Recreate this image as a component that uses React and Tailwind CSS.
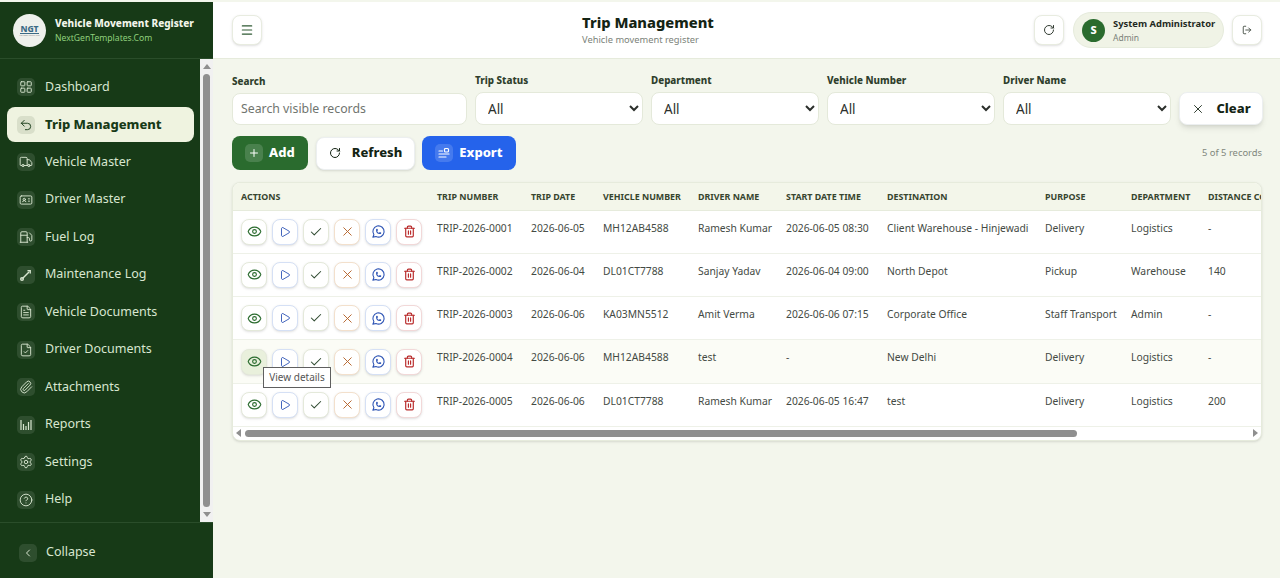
import React from "react";
import {
  LayoutGrid, Undo2, Truck, IdCard, Fuel, FileText, FileCheck, Paperclip,
  Settings, CircleHelp, ChevronLeft, Menu, RotateCw, LogOut, Plus, X, Eye, Play, Check, Trash2,
} from "lucide-react";
import { TbBrandWhatsapp } from "react-icons/tb";

const MaintenanceIcon = ({ size }) => (
  <svg width={size} height={size} viewBox="0 0 14 14" fill="none" stroke="currentColor" strokeWidth="1.4" strokeLinecap="round">
    <path d="M4 10l5.5-5.5" />
    <path d="M9 2.8h2.2v2.2" />
    <circle cx="3" cy="11" r="1.3" />
  </svg>
);

const ReportsIcon = ({ size }) => (
  <svg width={size} height={size} viewBox="0 0 14 14" fill="none" stroke="currentColor" strokeWidth="1.2">
    <path d="M2 2v10M4.5 6v6M7 8v4M9.5 4v8M12 2v10" />
  </svg>
);

const navItems = [
  { label: "Dashboard", icon: LayoutGrid },
  { label: "Trip Management", icon: Undo2, active: true },
  { label: "Vehicle Master", icon: Truck },
  { label: "Driver Master", icon: IdCard },
  { label: "Fuel Log", icon: Fuel },
  { label: "Maintenance Log", icon: MaintenanceIcon },
  { label: "Vehicle Documents", icon: FileText },
  { label: "Driver Documents", icon: FileCheck },
  { label: "Attachments", icon: Paperclip },
  { label: "Reports", icon: ReportsIcon },
  { label: "Settings", icon: Settings },
  { label: "Help", icon: CircleHelp },
];

const filters = ["Trip Status", "Department", "Vehicle Number", "Driver Name"];

const columns = [
  { label: "Actions", width: "w-[196px]" },
  { label: "Trip Number", width: "w-[94px]" },
  { label: "Trip Date", width: "w-[72px]" },
  { label: "Vehicle Number", width: "w-[95px]" },
  { label: "Driver Name", width: "w-[88px]" },
  { label: "Start Date Time", width: "w-[101px]" },
  { label: "Destination", width: "w-[158px]" },
  { label: "Purpose", width: "w-[86px]" },
  { label: "Department", width: "w-[77px]" },
  { label: "Distance Covered", width: "w-[120px]" },
];

const rows = [
  ["TRIP-2026-0001", "2026-06-05", "MH12AB4588", "Ramesh Kumar", "2026-06-05 08:30", "Client Warehouse - Hinjewadi", "Delivery", "Logistics", "-"],
  ["TRIP-2026-0002", "2026-06-04", "DL01CT7788", "Sanjay Yadav", "2026-06-04 09:00", "North Depot", "Pickup", "Warehouse", "140"],
  ["TRIP-2026-0003", "2026-06-06", "KA03MN5512", "Amit Verma", "2026-06-06 07:15", "Corporate Office", "Staff Transport", "Admin", "-"],
  ["TRIP-2026-0004", "2026-06-06", "MH12AB4588", "test", "-", "New Delhi", "Delivery", "Logistics", "-"],
  ["TRIP-2026-0005", "2026-06-06", "DL01CT7788", "Ramesh Kumar", "2026-06-05 16:47", "test", "Delivery", "Logistics", "200"],
];

const actionButtons = [
  { icon: Eye, size: 15, stroke: 1.8, cls: "border-[#e4e9da] text-[#2a6b2e]" },
  { icon: Play, size: 12, stroke: 1.8, cls: "border-[#d5e0f5] text-[#2f55b5]" },
  { icon: Check, size: 14, stroke: 1.8, cls: "border-[#e4e9da] text-[#2f4a30]" },
  { icon: X, size: 15, stroke: 1.5, cls: "border-[#f3e0cc] text-[#b4622a]" },
  { icon: TbBrandWhatsapp, size: 15, stroke: 1.8, cls: "border-[#d5e0f5] text-[#2f55b5]" },
  { icon: Trash2, size: 13, stroke: 2.2, cls: "border-[#f2d8d8] text-[#b92c2c]" },
];

const Sidebar = () => (
  <aside className="w-[213px] shrink-0 flex flex-col bg-[#173a17]">
    <div className="h-[57px] shrink-0 flex items-center gap-[9px] pl-[13px] border-b border-[#2a4d2a]">
      <div className="w-[33px] h-[33px] rounded-full bg-[#eef0ec] flex flex-col items-center justify-center">
        <span className="text-[8.5px] leading-[9px] font-extrabold text-[#3b6a86] border-b border-[#3b6a86]">NGT</span>
        <span className="text-[2px] leading-[3px] text-[#888888]">NEXTGEN TEMPLATES</span>
      </div>
      <div>
        <div className="text-[10px] leading-[16px] font-extrabold text-[#f2f5ea] whitespace-nowrap">Vehicle Movement Register</div>
        <div className="text-[8.6px] leading-[14px] text-[#8fd07c] whitespace-nowrap">NextGenTemplates.Com</div>
      </div>
    </div>

    <div className="flex-1 flex min-h-0">
      <nav className="flex-1 flex flex-col gap-[2.5px] pt-[10.5px] pl-[7px] pr-[6px]">
        {navItems.map((item) => {
          const Icon = item.icon;
          return (
            <div
              key={item.label}
              className={`h-[35px] shrink-0 flex items-center gap-[10px] pl-[10px] rounded-lg whitespace-nowrap ${
                item.active ? "bg-[#eff3e0] text-[#173a17] font-extrabold text-[13px]" : "text-[#d8e6d0] text-[12.5px]"
              }`}
            >
              <span className={`w-[18px] h-[18px] rounded-[5px] flex items-center justify-center ${item.active ? "bg-[#d9dfca]" : "bg-white/10"}`}>
                <Icon size={14} strokeWidth={1.6} />
              </span>
              {item.label}
            </div>
          );
        })}
      </nav>
      <div className="w-[13px] shrink-0 bg-[#f1f1f1] flex flex-col items-center py-[5px]">
        <span className="w-0 h-0 border-x-[4px] border-x-transparent border-b-[5px] border-b-[#8f8f8f]" />
        <span className="w-[7px] flex-1 my-[5px] rounded-full bg-[#8f8f8f]" />
        <span className="w-0 h-0 border-x-[4px] border-x-transparent border-t-[5px] border-t-[#8f8f8f]" />
      </div>
    </div>

    <div className="h-[56px] shrink-0 flex items-center gap-[9px] pl-[19px] pt-[4px] border-t border-[#2a4d2a] text-[12.5px] text-[#d8e6d0]">
      <span className="w-[18px] h-[18px] rounded-[5px] bg-white/10 flex items-center justify-center">
        <ChevronLeft size={12} />
      </span>
      Collapse
    </div>
  </aside>
);

const Header = () => (
  <header className="h-[57px] shrink-0 bg-white border-b border-[#e6ebdc] flex items-center justify-between pl-[19px] pr-[18px]">
    <button className="w-[30px] h-[30px] rounded-lg border border-[#e8ece0] bg-white shadow-sm flex items-center justify-center text-[#2f5a33]">
      <Menu size={14} />
    </button>
    <div>
      <div className="text-[14.7px] leading-[19px] font-extrabold text-[#142414]">Trip Management</div>
      <div className="text-[9.3px] leading-[15px] text-[#7b8279]">Vehicle movement register</div>
    </div>
    <div className="flex items-center">
      <button className="w-[30px] h-[30px] rounded-lg border border-[#e8ece0] bg-white shadow-sm flex items-center justify-center text-[#333d33]">
        <RotateCw size={12} />
      </button>
      <div className="ml-[9px] w-[151px] h-[36px] rounded-full bg-[#f0f3e6] border border-[#e6ebdc] flex items-center gap-[8px] pl-[8px]">
        <span className="w-[23px] h-[23px] rounded-full bg-[#2a6b2e] text-white text-[11px] font-extrabold flex items-center justify-center">S</span>
        <div>
          <div className="text-[9.4px] leading-[14px] font-bold text-[#1f2a1f] whitespace-nowrap">System Administrator</div>
          <div className="text-[8.5px] leading-[13px] text-[#7b8279]">Admin</div>
        </div>
      </div>
      <button className="ml-[8px] w-[30px] h-[30px] rounded-lg border border-[#e8ece0] bg-white shadow-sm flex items-center justify-center text-[#333d33]">
        <LogOut size={10} />
      </button>
    </div>
  </header>
);

const Filters = () => (
  <div className="flex items-end gap-2">
    <div className="w-[235px] shrink-0">
      <div className="text-[9.8px] leading-[14px] font-extrabold text-[#2f3f2c] mb-[4px]">Search</div>
      <div className="h-[32px] rounded-lg border border-[#e4e9da] bg-white px-2 flex items-center text-[12.3px] text-[#70756f]">Search visible records</div>
    </div>
    {filters.map((name) => (
      <div key={name} className="w-[168px] shrink-0">
        <div className="text-[9.8px] leading-[14px] font-extrabold text-[#2f3f2c] mb-[4px]">{name}</div>
        <select className="w-full h-[33px] rounded-lg border border-[#e4e9da] bg-white px-2 text-[13.5px] text-[#2b2f2b]">
          <option>All</option>
        </select>
      </div>
    ))}
    <button className="w-[84px] h-[33px] rounded-lg border border-[#eceff0] bg-white shadow-md flex items-center justify-center gap-[11px] text-[13px] font-extrabold text-[#142414]">
      <X size={14} strokeWidth={1.5} />
      Clear
    </button>
  </div>
);

const Toolbar = () => (
  <div className="mt-[11px] mr-[1px] flex items-center">
    <button className="w-[76px] h-[34px] rounded-lg bg-[#2a6b2e] text-white text-[13px] font-extrabold flex items-center justify-center gap-[6px]">
      <span className="w-[18px] h-[18px] rounded-[5px] bg-white/15 flex items-center justify-center">
        <Plus size={12} />
      </span>
      Add
    </button>
    <button className="ml-2 w-[99px] h-[33px] rounded-lg border border-[#eceff0] bg-white shadow-sm text-[#142414] text-[13px] font-extrabold flex items-center justify-center gap-[11px]">
      <RotateCw size={12} />
      Refresh
    </button>
    <button className="ml-[7px] w-[94px] h-[34px] rounded-lg bg-[#2563eb] text-white text-[13px] font-extrabold flex items-center justify-center gap-[6px]">
      <span className="w-[18px] h-[18px] rounded-[5px] bg-white/15 flex items-center justify-center">
        <svg width="12" height="12" viewBox="0 0 12 12" fill="none" stroke="currentColor" strokeWidth="1.2" strokeLinecap="round">
          <rect x="6.5" y="1.5" width="4" height="3.5" rx="1" />
          <path d="M1 4h3.5M1 7h10M1 10h7" />
        </svg>
      </span>
      Export
    </button>
    <span className="ml-auto text-[9.4px] text-[#7f867c]">5 of 5 records</span>
  </div>
);

const ActionCell = ({ tooltip }) => (
  <div className="flex gap-[5px]">
    {actionButtons.map((btn, i) => {
      const Icon = btn.icon;
      const hovered = tooltip && i === 0;
      return (
        <button
          key={i}
          className={`relative w-[26px] h-[26px] shrink-0 rounded-lg border shadow-sm flex items-center justify-center ${btn.cls} ${
            hovered ? "bg-[#e9f0dc]" : "bg-white"
          }`}
        >
          <Icon size={btn.size} strokeWidth={btn.stroke} />
          {hovered && (
            <span className="absolute z-10 left-[21px] top-[17px] w-[68px] h-[21px] bg-white border border-[#5f5f5f] text-[10px] leading-[19px] text-center text-[#555555] whitespace-nowrap">
              View details
            </span>
          )}
        </button>
      );
    })}
  </div>
);

const TripTable = () => (
  <div className="mt-[12px] mr-[1px] rounded-lg border border-[#e6ebdc] bg-white shadow-sm overflow-hidden">
    <table className="table-fixed w-[1087px] border-collapse text-left">
      <thead>
        <tr className="h-[27px] bg-[#f3f6ea] border-b border-[#e6ebdc]">
          {columns.map((col) => (
            <th key={col.label} className={`${col.width} px-2 text-[8.9px] font-bold uppercase text-[#37452f] whitespace-nowrap overflow-hidden`}>
              {col.label}
            </th>
          ))}
        </tr>
      </thead>
      <tbody>
        {rows.map((row, i) => (
          <tr key={row[0]} className={`h-[43.3px] border-b border-[#eef1e8] ${i === 3 ? "bg-[#fbfcf6]" : ""}`}>
            <td className="px-2 py-0 align-middle">
              <ActionCell tooltip={i === 3} />
            </td>
            {row.map((cell, j) => (
              <td key={j} className="px-2 pt-[9px] align-top text-[10.3px] leading-[16px] text-[#444a44] whitespace-nowrap">
                {cell}
              </td>
            ))}
          </tr>
        ))}
      </tbody>
    </table>
    <div className="h-[13px] flex items-center px-[3px]">
      <span className="w-0 h-0 border-y-[4px] border-y-transparent border-r-[5px] border-r-[#8f8f8f]" />
      <div className="flex-1 mx-[4px]">
        <div className="w-[832px] h-[7px] rounded-full bg-[#8f8f8f]" />
      </div>
      <span className="w-0 h-0 border-y-[4px] border-y-transparent border-l-[5px] border-l-[#8f8f8f]" />
    </div>
  </div>
);

export default function App() {
  return (
    <div className="h-screen flex overflow-hidden pt-[2px] bg-[#f3f6ec] font-['Noto_Sans',sans-serif]">
      <Sidebar />
      <main className="flex-1 min-w-0 flex flex-col">
        <Header />
        <div className="pt-[15px] pl-[19px] pr-[17px]">
          <Filters />
          <Toolbar />
          <TripTable />
        </div>
      </main>
    </div>
  );
}
